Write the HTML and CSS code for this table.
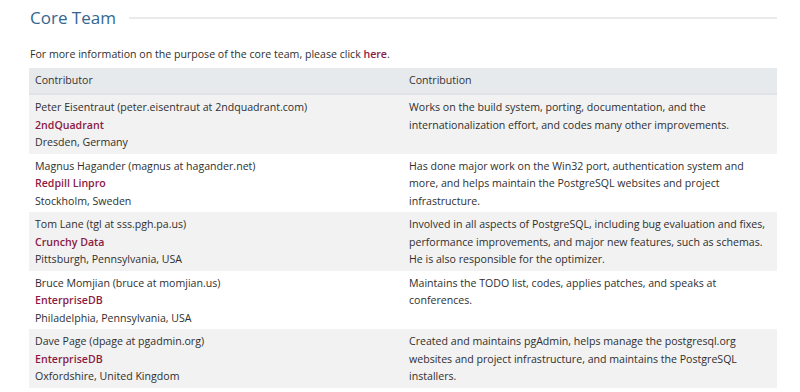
FILE: index.html
```html
<!DOCTYPE html>
<html lang="en">
<head>
<meta charset="utf-8">
<title>Core Team</title>
<link rel="stylesheet" href="styles.css">
</head>
<body>
<main class="page">
  <h2 class="section-title"><span>Core Team</span></h2>
  <p class="intro">For more information on the purpose of the core team, please click <a href="#" class="strong-link">here</a>.</p>
  <table class="team">
    <thead>
      <tr><th>Contributor</th><th>Contribution</th></tr>
    </thead>
    <tbody>
      <tr>
        <td>Peter Eisentraut (peter.eisentraut at 2ndquadrant.com)<br><a href="#" class="org">2ndQuadrant</a><br>Dresden, Germany</td>
        <td>Works on the build system, porting, documentation, and the internationalization effort, and codes many other improvements.</td>
      </tr>
      <tr>
        <td>Magnus Hagander (magnus at hagander.net)<br><a href="#" class="org">Redpill Linpro</a><br>Stockholm, Sweden</td>
        <td>Has done major work on the Win32 port, authentication system and more, and helps maintain the PostgreSQL websites and project infrastructure.</td>
      </tr>
      <tr>
        <td>Tom Lane (tgl at sss.pgh.pa.us)<br><a href="#" class="org">Crunchy Data</a><br>Pittsburgh, Pennsylvania, USA</td>
        <td>Involved in all aspects of PostgreSQL, including bug evaluation and fixes, performance improvements, and major new features, such as schemas. He is also responsible for the optimizer.</td>
      </tr>
      <tr>
        <td>Bruce Momjian (bruce at momjian.us)<br><a href="#" class="org">EnterpriseDB</a><br>Philadelphia, Pennsylvania, USA</td>
        <td>Maintains the TODO list, codes, applies patches, and speaks at conferences.</td>
      </tr>
      <tr>
        <td>Dave Page (dpage at pgadmin.org)<br><a href="#" class="org">EnterpriseDB</a><br>Oxfordshire, United Kingdom</td>
        <td>Created and maintains pgAdmin, helps manage the postgresql.org websites and project infrastructure, and maintains the PostgreSQL installers.</td>
      </tr>
    </tbody>
  </table>
</main>
</body>
</html>
```

FILE: styles.css
```css
html, body {
  margin: 0;
  padding: 0;
  background: #fff;
}
body {
  font-family: "Open Sans", "Noto Sans", sans-serif;
  font-size: 10.6px;
  line-height: 17.5px;
  color: #2f2f2f;
}
.page {
  width: 748px;
  padding: 6px 0 0 29px;
}
.section-title {
  display: flex;
  align-items: center;
  margin: 0;
  font-size: 17px;
  font-weight: 400;
  line-height: 24px;
  color: #336791;
  padding-left: 1px;
}
.section-title::after {
  content: "";
  flex: 1;
  height: 2px;
  background: #ebebeb;
  margin-left: 13px;
  margin-top: 0;
}
.intro {
  margin: 16px 0 0 1px;
}
.strong-link {
  color: #8b1a44;
  font-weight: 600;
  text-decoration: none;
}
.team {
  width: 100%;
  margin-top: 4px;
  border-collapse: collapse;
  table-layout: fixed;
}
.team th {
  background: #e7eaed;
  font-weight: 400;
  color: #333;
  text-align: left;
  padding: 4px 6px;
  border-bottom: 2px solid #dfe3e7;
}
.team td {
  vertical-align: top;
  padding: 4px 6px 2px;
}
.team tbody tr:nth-child(odd) td {
  background: #f2f2f2;
}
.org {
  color: #8b1a44;
  font-weight: 600;
  text-decoration: none;
}
```
